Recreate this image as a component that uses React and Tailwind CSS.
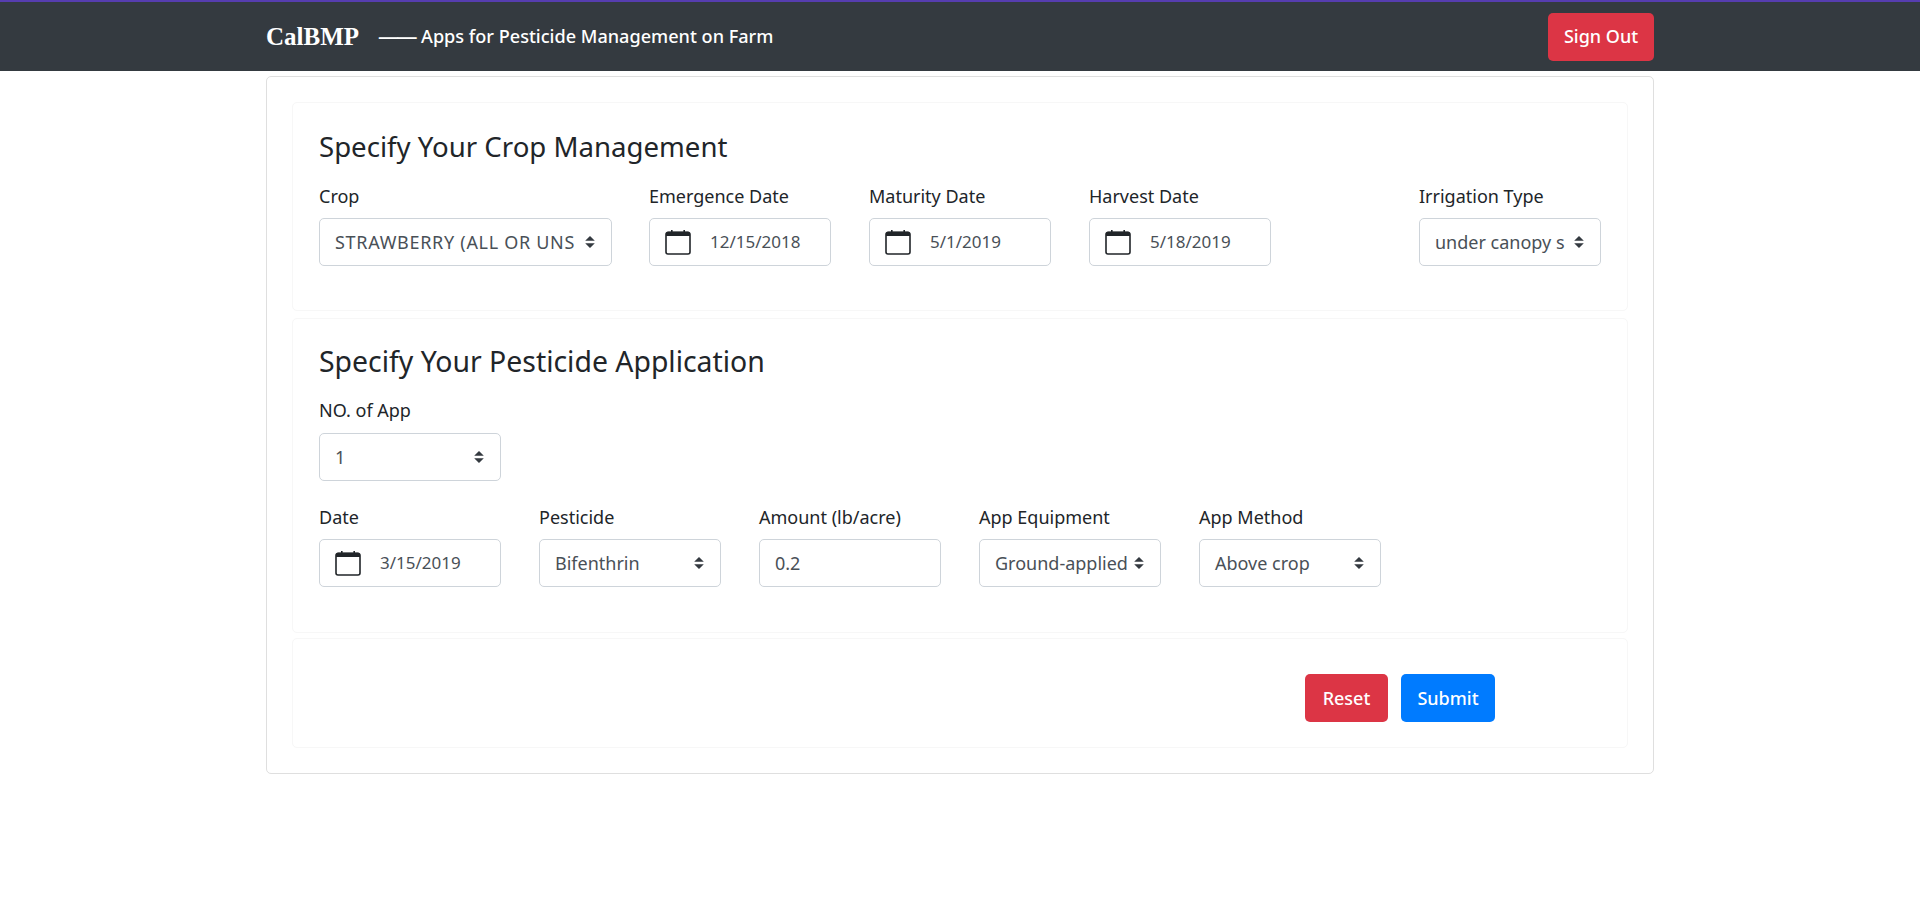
import React from 'react';

const Arrows = () => (
    <svg viewBox="0 0 4 5" className="w-[10px] h-[12px] shrink-0 text-[#343a40]">
        <path fill="currentColor" d="M2 0L0 2h4zm0 5L0 3h4z" />
    </svg>
);

const CalendarIcon = () => (
    <svg viewBox="0 0 26 26" className="w-[26px] h-[26px] shrink-0 text-[#212529]">
        <rect x="1" y="3.5" width="24" height="21.5" rx="2" fill="none" stroke="currentColor" strokeWidth="1.6" />
        <path fill="currentColor" d="M1 4.5a2 2 0 0 1 2-2h3V1h1.6v1.5h10.8V1H20v1.5h3a2 2 0 0 1 2 2V7H1z" />
    </svg>
);

const Field = ({ label, width = 'w-[182px]', gap = 'mb-[10px]', children }) => (
    <div className={width}>
        <div className={`h-6 leading-6 text-[18px] text-[#212529] whitespace-nowrap ${gap}`}>{label}</div>
        {children}
    </div>
);

const Box = ({ className = '', children }) => (
    <div className={`flex h-12 items-center rounded-[5px] border border-[#ced4da] bg-white text-[18px] text-[#495057] ${className}`}>
        {children}
    </div>
);

const SelectField = ({ label, value, width, gap, valueClass = '' }) => (
    <Field label={label} width={width} gap={gap}>
        <Box className="pl-[15px] pr-[16px]">
            <span className={`min-w-0 flex-1 whitespace-nowrap ${valueClass}`}>{value}</span>
            <Arrows />
        </Box>
    </Field>
);

const DateField = ({ label, value }) => (
    <Field label={label}>
        <Box className="pl-[15px]">
            <CalendarIcon />
            <span className="ml-[19px] whitespace-nowrap text-[17px]">{value}</span>
        </Box>
    </Field>
);

const Section = ({ className = '', children }) => (
    <div className={`rounded-[5px] border border-[#f7f7f7] ${className}`}>{children}</div>
);

export default function App() {
    return (
        <div className="min-h-[902px] bg-white font-['Noto_Sans',sans-serif]">
            <header className="h-[71px] border-t-2 border-[#563db0] bg-[#343a40]">
                <div className="mx-auto flex h-[69px] w-[1388px] items-center">
                    <span className="font-['Liberation_Serif',serif] text-[25px] font-bold text-white">CalBMP</span>
                    <span className="ml-[19px] text-[21px] tracking-[-2.5px] text-white">——</span>
                    <span className="ml-[6px] text-[18.1px] font-medium text-white">Apps for Pesticide Management on Farm</span>
                    <button className="ml-auto h-12 w-[106px] rounded-[5px] bg-[#dc3545] text-[18px] font-medium text-white">Sign Out</button>
                </div>
            </header>
            <main className="mx-auto mt-[5px] flex h-[698px] w-[1388px] flex-col rounded-[5px] border border-[#dfdfdf] px-[25px] pt-[25px]">
                <Section className="h-[209px] px-[26px] pt-[26px]">
                    <h2 className="mb-[20px] text-[27.6px] leading-[35px] text-[#212529]">Specify Your Crop Management</h2>
                    <div className="grid grid-cols-[330px_220px_220px_330px_220px]">
                        <SelectField label="Crop" value="STRAWBERRY (ALL OR UNS" width="w-[293px]" valueClass="tracking-[0.7px]" />
                        <DateField label="Emergence Date" value="12/15/2018" />
                        <DateField label="Maturity Date" value="5/1/2019" />
                        <DateField label="Harvest Date" value="5/18/2019" />
                        <SelectField label="Irrigation Type" value="under canopy s" />
                    </div>
                </Section>
                <Section className="mt-[7px] h-[315px] px-[26px] pt-[25px]">
                    <h2 className="mb-[19px] text-[28.4px] leading-[35px] text-[#212529]">Specify Your Pesticide Application</h2>
                    <div className="h-[83px]">
                        <SelectField label="NO. of App" value="1" gap="mb-[11px]" />
                    </div>
                    <div className="mt-[24px] grid grid-cols-[220px_220px_220px_220px_220px]">
                        <DateField label="Date" value="3/15/2019" />
                        <SelectField label="Pesticide" value="Bifenthrin" />
                        <Field label="Amount (lb/acre)">
                            <Box className="px-[15px]">0.2</Box>
                        </Field>
                        <SelectField label="App Equipment" value="Ground-applied" />
                        <SelectField label="App Method" value="Above crop" />
                    </div>
                </Section>
                <Section className="mt-[5px] flex h-[110px] items-start pl-[1012px] pt-[35px]">
                    <button className="h-12 w-[83px] rounded-[5px] bg-[#dc3545] text-[18px] font-medium text-white">Reset</button>
                    <button className="ml-[13px] h-12 w-[94px] rounded-[5px] bg-[#007bff] text-[18px] font-medium text-white">Submit</button>
                </Section>
            </main>
        </div>
    );
}
